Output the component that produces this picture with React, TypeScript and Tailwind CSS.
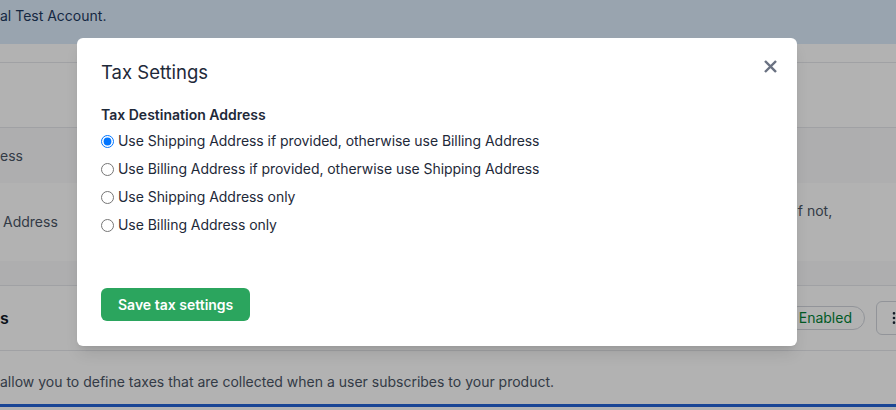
import { EllipsisVertical } from 'lucide-react';

const options = [
    'Use Shipping Address if provided, otherwise use Billing Address',
    'Use Billing Address if provided, otherwise use Shipping Address',
    'Use Shipping Address only',
    'Use Billing Address only',
];

export default function App() {
    return (
        <div className="relative w-[896px] h-[410px] overflow-hidden bg-white font-['Inter',sans-serif]">
            {/* Page behind the dialog */}
            <div className="flex flex-col h-full">
                <div className="h-[44px] shrink-0 bg-[#dcebfb] pt-[6px] text-sm leading-5 text-[#1e3a5f]">
                    al Test Account.
                </div>
                <div className="h-[19px] shrink-0 border-b border-gray-200" />
                <div className="h-[65px] shrink-0 border-b border-gray-200" />
                <div className="h-[55px] shrink-0 bg-gray-50 flex items-center text-sm text-gray-600">ess</div>
                <div className="h-[78px] shrink-0 flex items-center justify-between text-sm text-gray-600">
                    <span className="pl-[3px]">Address</span>
                    <span className="w-[102px] leading-[22px] -mt-[22px]">If not,</span>
                </div>
                <div className="h-[25px] shrink-0 bg-gray-50 border-b border-gray-200" />
                <div className="h-[65px] shrink-0 flex items-center border-b border-gray-200">
                    <span className="flex-1 text-base font-semibold text-gray-900">s</span>
                    <span className="h-6 px-3 flex items-center rounded-full border border-gray-300 text-sm text-green-700">
                        Enabled
                    </span>
                    <button className="ml-[11px] -mr-[16px] w-9 h-[34px] rounded-md border border-gray-300 flex items-center justify-center text-gray-800">
                        <EllipsisVertical size={16} />
                    </button>
                </div>
                <div className="h-[53px] shrink-0 flex items-center pt-[8px] text-sm text-gray-600">
                    allow you to define taxes that are collected when a user subscribes to your product.
                </div>
                <div className="h-[3px] shrink-0 bg-[#2563d6]" />
            </div>

            {/* Overlay + dialog */}
            <div className="absolute inset-0 bg-black/30 pl-[77px] pt-[38px]">
                <div className="relative w-[720px] h-[308px] bg-white rounded-md shadow-lg px-6 pt-5 pb-[25px] flex flex-col">
                    <button className="absolute top-[21px] right-[19px] w-[14px] h-[14px] text-gray-500">
                        <svg width="13" height="13" viewBox="0 0 14 14" fill="none" stroke="currentColor" strokeWidth="2.6" strokeLinecap="square">
                            <path d="M2 2 L12 12 M12 2 L2 12" />
                        </svg>
                    </button>
                    <h2 className="text-[18.5px] leading-7 text-gray-800">Tax Settings</h2>
                    <p className="mt-[19px] text-sm leading-5 font-semibold text-gray-800">Tax Destination Address</p>
                    <div className="mt-[2px] flex flex-col">
                        {options.map((opt, i) => (
                            <label key={opt} className="flex items-center h-7 text-sm text-gray-800 tracking-[-0.05px]">
                                <input type="radio" name="dest" defaultChecked={i === 0} className="m-0 mr-1 w-[13px] h-[13px]" />
                                <span>{opt}</span>
                            </label>
                        ))}
                    </div>
                    <div className="mt-auto">
                        <button className="h-[33px] px-[17px] rounded-md bg-[#2ba55e] text-white text-sm font-semibold">
                            Save tax settings
                        </button>
                    </div>
                </div>
            </div>
        </div>
    );
}
